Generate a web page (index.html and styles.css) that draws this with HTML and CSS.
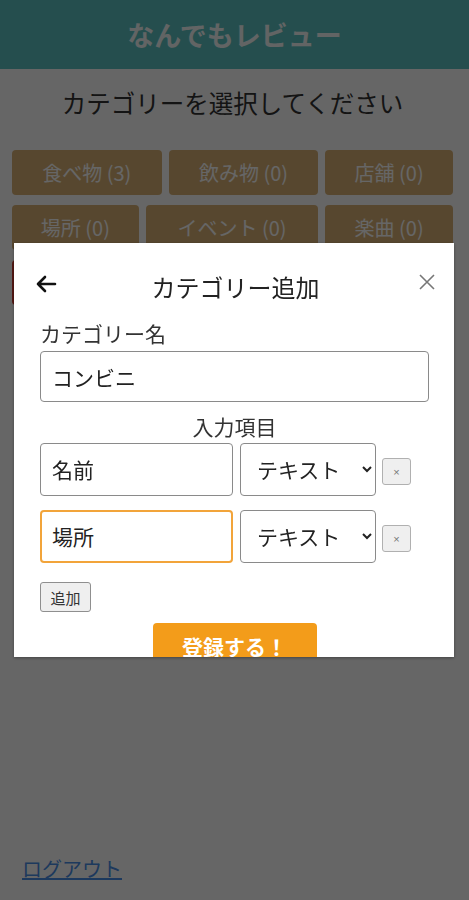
FILE: index.html
```html
<!DOCTYPE html>
<html lang="ja">
<head>
<meta charset="utf-8">
<title>なんでもレビュー</title>
<link rel="stylesheet" href="styles.css">
</head>
<body>
<header class="app-header">なんでもレビュー</header>
<main class="page">
  <h2 class="subtitle">カテゴリーを選択してください</h2>
  <div class="cat-row cat-row-a">
    <button class="cat-btn">食べ物 (3)</button>
    <button class="cat-btn">飲み物 (0)</button>
    <button class="cat-btn">店舗 (0)</button>
  </div>
  <div class="cat-row cat-row-b">
    <button class="cat-btn">場所 (0)</button>
    <button class="cat-btn">イベント (0)</button>
    <button class="cat-btn">楽曲 (0)</button>
  </div>
  <div class="cat-row cat-row-c">
    <button class="add-cat-btn">＋ 追加</button>
  </div>
</main>
<footer class="footer">
  <a class="logout" href="#">ログアウト</a>
</footer>

<div class="overlay"></div>
<div class="modal">
  <div class="modal-head">
    <span class="back">
      <svg width="22" height="18" viewBox="0 0 22 18"><path d="M20 9H3M10 2L3 9l7 7" fill="none" stroke="#111" stroke-width="2.6" stroke-linecap="round" stroke-linejoin="round"/></svg>
    </span>
    <h3 class="modal-title">カテゴリー追加</h3>
    <span class="close">
      <svg width="18" height="18" viewBox="0 0 18 18"><path d="M2 2L16 16M16 2L2 16" fill="none" stroke="#777" stroke-width="1.6"/></svg>
    </span>
  </div>
  <div class="modal-body">
    <label class="field-label">カテゴリー名</label>
    <input class="text-input name-input" type="text" value="コンビニ">
    <div class="section-label">入力項目</div>
    <div class="item-row">
      <input class="text-input item-input" type="text" value="名前">
      <select class="type-select"><option>テキスト</option></select>
      <button class="remove-btn">×</button>
    </div>
    <div class="item-row second">
      <input class="text-input item-input focused" type="text" value="場所">
      <select class="type-select"><option>テキスト</option></select>
      <button class="remove-btn">×</button>
    </div>
    <button class="add-btn">追加</button>
    <div class="submit-wrap">
      <button class="submit-btn">登録する！</button>
    </div>
  </div>
</div>
</body>
</html>
```

FILE: styles.css
```css
* { box-sizing: border-box; }

html, body {
  margin: 0;
  padding: 0;
}

body {
  min-height: 100vh;
  display: flex;
  flex-direction: column;
  background: #ffffff;
  font-family: "Noto Sans CJK JP", "Noto Sans", sans-serif;
  color: #333;
}

.app-header {
  height: 69px;
  background: #5cc4c4;
  color: #f4fbfb;
  font-size: 27px;
  font-weight: 700;
  display: flex;
  align-items: center;
  justify-content: center;
}

.page {
  padding: 0 16px 0 12px;
}

.subtitle {
  margin: 16px 0 29px;
  text-align: center;
  font-size: 24.5px;
  font-weight: 400;
  line-height: 36px;
  color: #333;
}

.cat-row {
  display: grid;
  gap: 7px;
  margin-bottom: 10px;
}

.cat-row-a { grid-template-columns: 150fr 150fr 128fr; }
.cat-row-b { grid-template-columns: 127fr 173fr 128fr; }
.cat-row-c { grid-template-columns: 150px; }

.cat-btn, .add-cat-btn {
  height: 45px;
  border: none;
  border-radius: 4px;
  background: #dab276;
  color: #ffffff;
  font-family: "Noto Sans CJK JP", "Noto Sans", sans-serif;
  font-size: 20px;
  padding: 0;
}

.add-cat-btn {
  background: #d43c30;
}

.footer {
  margin-top: auto;
  padding: 0 0 16px 22px;
}

.logout {
  font-size: 20px;
  line-height: 30px;
  color: #4a8fe8;
  text-decoration: underline;
}

.overlay {
  position: fixed;
  inset: 0;
  background: rgba(0, 0, 0, 0.6);
}

.modal {
  position: fixed;
  left: 14px;
  top: 243px;
  width: 440px;
  height: 414px;
  background: #fff;
  overflow: hidden;
  box-shadow: 0 1px 3px rgba(0, 0, 0, 0.35);
}

.modal-head {
  display: grid;
  grid-template-columns: 1fr auto 1fr;
  align-items: center;
  padding: 20px 18px 4px 21px;
  height: 60px;
}

.back {
  display: flex;
  align-items: center;
}

.close {
  display: flex;
  justify-content: flex-end;
  align-items: center;
  margin-top: -4px;
}

.modal-title {
  margin: 0;
  font-size: 24px;
  font-weight: 400;
  line-height: 36px;
  color: #222;
  padding-top: 6px;
}

.modal-body {
  padding: 0 25px 0 26px;
  display: flex;
  flex-direction: column;
  align-items: flex-start;
}

.field-label {
  margin-top: 15px;
  font-size: 21px;
  line-height: 30px;
  color: #333;
}

.text-input {
  font-family: "Noto Sans CJK JP", "Noto Sans", sans-serif;
  font-size: 21px;
  color: #222;
  border: 1px solid #8a8a8a;
  border-radius: 4px;
  padding: 0 0 0 11px;
  background: #fff;
  outline: none;
}

.name-input {
  margin-top: 3px;
  width: 389px;
  height: 51px;
}

.section-label {
  align-self: stretch;
  text-align: center;
  margin-top: 9px;
  font-size: 21px;
  line-height: 30px;
  color: #333;
}

.item-row {
  display: flex;
  align-items: center;
  height: 54px;
  margin-top: 1px;
}

.item-row.second {
  margin-top: 13px;
}

.item-input {
  width: 193px;
  height: 53px;
}

.item-input.focused {
  border: 2px solid #f2a43a;
  padding-left: 10px;
}

.type-select {
  margin-left: 7px;
  width: 136px;
  height: 53px;
  font-family: "Noto Sans CJK JP", "Noto Sans", sans-serif;
  font-size: 21px;
  color: #222;
  border: 1px solid #8a8a8a;
  border-radius: 4px;
  background: #fff;
  padding-left: 12px;
}

.remove-btn {
  margin-left: 6px;
  margin-top: 5px;
  width: 29px;
  height: 27px;
  padding: 0;
  background: #efefef;
  border: 1px solid #b0b0b0;
  border-radius: 3px;
  color: #777;
  font-size: 11px;
  font-family: "Liberation Sans", sans-serif;
}

.add-btn {
  margin-top: 19px;
  width: 51px;
  height: 30px;
  padding: 0;
  background: #efefef;
  border: 1px solid #8f8f8f;
  border-radius: 3px;
  font-family: "Noto Sans CJK JP", sans-serif;
  font-size: 15px;
  color: #333;
}

.submit-wrap {
  align-self: stretch;
  display: flex;
  justify-content: center;
  margin-top: 11px;
}

.submit-btn {
  width: 164px;
  height: 46px;
  border: none;
  border-radius: 4px;
  background: #f39c1a;
  color: #fff;
  font-family: "Noto Sans CJK JP", sans-serif;
  font-size: 21px;
  font-weight: 700;
  padding: 0;
}
```
